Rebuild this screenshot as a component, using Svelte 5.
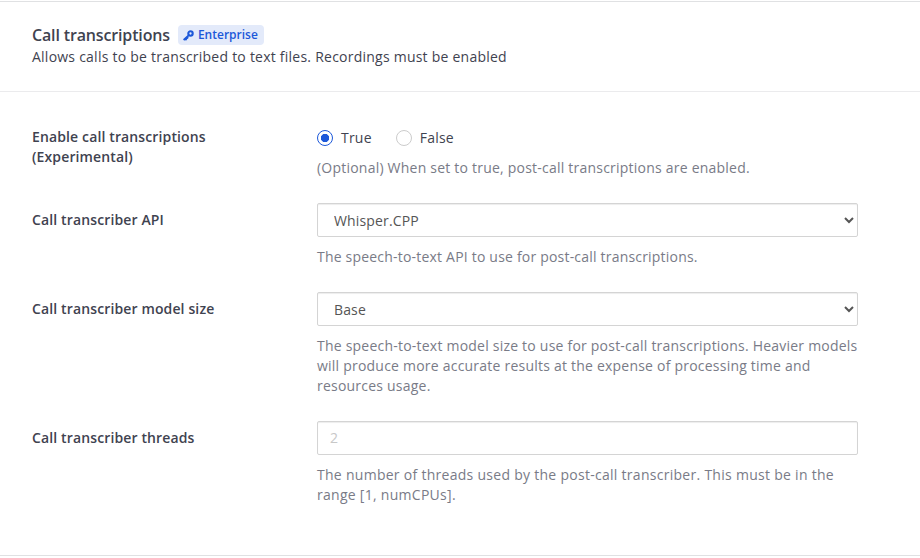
<script>
  let enabled = $state('true');
  let api = $state('Whisper.CPP');
  let size = $state('Base');
  let threads = $state('');
</script>

<section class="panel">
  <header>
    <div class="title">
      <h2>Call transcriptions</h2>
      <span class="badge">
        <svg width="11" height="11" viewBox="0 0 11 11" fill="none" stroke="currentColor">
          <circle cx="7.5" cy="3.5" r="2.2" stroke-width="2.1" />
          <path d="M5.9 5.1 L.6 10 M1.7 8.3 L3.6 10.2 M3.5 6.6 L5.2 8.3" stroke-width="1.8" />
        </svg>
        Enterprise
      </span>
    </div>
    <p>Allows calls to be transcribed to text files. Recordings must be enabled</p>
  </header>
  <div class="body">
    <div class="row">
      <div class="label">Enable call transcriptions (Experimental)</div>
      <div class="field">
        <div class="radios">
          <label><input type="radio" value="true" bind:group={enabled} />True</label>
          <label><input type="radio" value="false" bind:group={enabled} />False</label>
        </div>
        <p class="help">(Optional) When set to true, post-call transcriptions are enabled.</p>
      </div>
    </div>
    <div class="row">
      <label class="label" for="api">Call transcriber API</label>
      <div class="field">
        <select id="api" class="control" bind:value={api}><option>Whisper.CPP</option></select>
        <p class="help api">The speech-to-text API to use for post-call transcriptions.</p>
      </div>
    </div>
    <div class="row">
      <label class="label" for="size">Call transcriber model size</label>
      <div class="field">
        <select id="size" class="control" bind:value={size}><option>Base</option></select>
        <p class="help">The speech-to-text model size to use for post-call transcriptions. Heavier models will produce more accurate results at the expense of processing time and resources usage.</p>
      </div>
    </div>
    <div class="row">
      <label class="label" for="threads">Call transcriber threads</label>
      <div class="field">
        <input id="threads" class="control" placeholder="2" bind:value={threads} />
        <p class="help threads">The number of threads used by the post-call transcriber. This must be in the range [1, numCPUs].</p>
      </div>
    </div>
  </div>
</section>

<style>
  :global(body) { background: #fff; }
  :global(#app) { display: flow-root; }
  .panel {
    box-sizing: border-box;
    height: 555px;
    margin: 1px 0 2px;
    border-top: 1px solid #e0e1e3;
    border-bottom: 1px solid #e0e1e3;
    font: 14px/20px "Open Sans", sans-serif;
    color: #3f4350;
  }
  header {
    box-sizing: border-box;
    height: 90px;
    padding: 23px 32px 0;
    border-bottom: 1px solid #ebebed;
  }
  .title { display: flex; align-items: center; gap: 8px; height: 20px; }
  h2 { margin: 0; font-size: 16px; font-weight: 600; line-height: 20px; letter-spacing: -0.15px; }
  header p { margin: 2px 0 0; letter-spacing: 0.236px; }
  .badge {
    display: flex;
    align-items: center;
    gap: 4px;
    box-sizing: border-box;
    height: 20px;
    padding: 0 6px 0 5px;
    border-radius: 4px;
    background: #e3eafa;
    color: #1c58d9;
    font-size: 12px;
    font-weight: 600;
  }
  .body { padding: 35px 62px 0 32px; }
  .row { display: flex; margin-bottom: 25px; }
  .row .label { flex: none; box-sizing: border-box; width: 285px; padding-right: 70px; font-weight: 600; letter-spacing: 0.13px; }
  .row + .row .label { padding-top: 7px; }
  .field { flex: 1; min-width: 0; }
  .radios { display: flex; gap: 24px; height: 22px; align-items: center; letter-spacing: 0.22px; }
  .radios label { display: flex; align-items: center; gap: 8px; }
  .radios input {
    appearance: none;
    box-sizing: border-box;
    width: 16px;
    height: 16px;
    margin: 0;
    border: 1px solid #ccc;
    border-radius: 50%;
  }
  .radios input:checked {
    border-color: #1c58d9;
    background: radial-gradient(circle, #1c58d9 3.8px, #fff 4.5px);
  }
  .help { margin: 10px 0 0; color: #797b87; letter-spacing: 0.22px; }
  .help.api { letter-spacing: 0.2px; }
  .help.threads { letter-spacing: 0.28px; }
  .radios + .help { margin-top: 9px; }
  .control {
    display: block;
    box-sizing: border-box;
    width: 541px;
    height: 34px;
    padding: 6px 12px;
    border: 1px solid #d4d4d4;
    border-radius: 2px;
    background: #fff;
    box-shadow: inset 0 1px 1px rgb(0 0 0 / 7.5%);
    color: #555;
    font: 14px/20px "Open Sans", sans-serif;
    letter-spacing: 0.15px;
  }
  input.control { padding: 5px 12px 7px; }
  .control::placeholder { color: #c8c8c8; opacity: 1; }
</style>
